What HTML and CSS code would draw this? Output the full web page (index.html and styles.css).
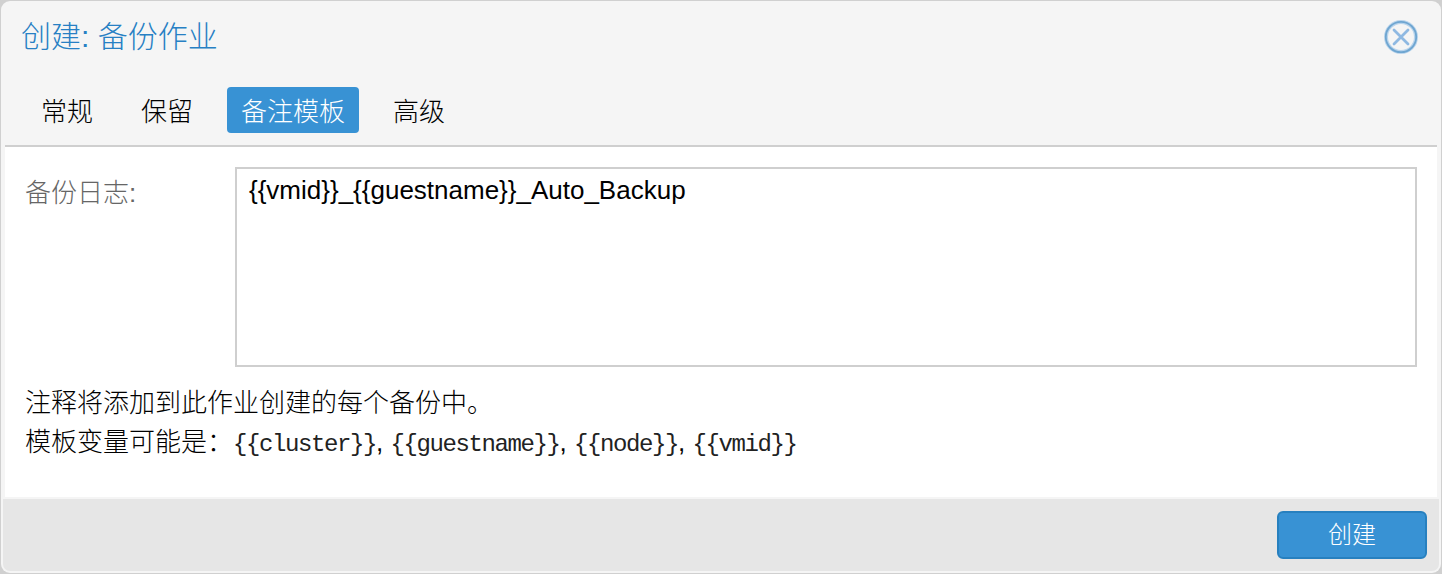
FILE: index.html
```html
<!DOCTYPE html>
<html lang="zh-CN">
<head>
<meta charset="utf-8">
<title>创建: 备份作业</title>
<link rel="stylesheet" href="styles.css">
</head>
<body>
<div class="window">
  <header class="header">
    <h1 class="title">创建: 备份作业</h1>
    <button class="close" aria-label="关闭">
      <svg width="34" height="34" viewBox="0 0 34 34" fill="none">
        <circle cx="17" cy="17" r="15" stroke="#b9d4ec" stroke-width="4"/>
        <circle cx="17" cy="17" r="15.2" stroke="#6fa6d1" stroke-width="1.8"/>
        <path d="M10 10L24 24M24 10L10 24" stroke="#8fb9e2" stroke-width="2.8" stroke-linecap="round"/>
      </svg>
    </button>
  </header>
  <nav class="tabs">
    <a class="tab">常规</a>
    <a class="tab">保留</a>
    <a class="tab active">备注模板</a>
    <a class="tab">高级</a>
  </nav>
  <main class="panel">
    <div class="field">
      <label class="label" for="notes">备份日志:</label>
      <textarea class="notes" id="notes" spellcheck="false">{{vmid}}_{{guestname}}_Auto_Backup</textarea>
    </div>
    <div class="hint">注释将添加到此作业创建的每个备份中。<br>模板变量可能是：<code>{{cluster}}</code>, <code>{{guestname}}</code>, <code>{{node}}</code>, <code>{{vmid}}</code></div>
  </main>
  <footer class="footer">
    <button class="submit">创建</button>
  </footer>
</div>
</body>
</html>
```
FILE: styles.css
```css
* { box-sizing: border-box; }
body {
  margin: 0;
  height: 574px;
  padding: 1px 1px 1px;
  overflow: hidden;
  background: #d0d0d0;
  font-family: "Liberation Sans", "Noto Sans CJK SC", sans-serif;
  font-size: 26px;
  font-weight: 300;
  color: #000;
}
.window {
  display: flex;
  flex-direction: column;
  height: 572px;
  padding: 0 2px 2px;
  overflow: hidden;
  border-radius: 9px;
  background: #f5f5f5;
}
.header {
  display: flex;
  justify-content: space-between;
  height: 86px;
  padding: 14px 21px 0 18px;
}
.title {
  margin: 0;
  font-size: 30px;
  line-height: 44px;
  font-weight: 300;
  color: #2780c4;
}
.close {
  width: 34px;
  height: 34px;
  margin-top: 5px;
  padding: 0;
  border: 0;
  background: none;
}
.close svg { display: block; }
.tabs {
  display: flex;
  gap: 20px;
  height: 60px;
  margin: 0 2px;
  padding-left: 22px;
  border-bottom: 2px solid #cfcfcf;
}
.tab {
  height: 46px;
  padding: 0 14px;
  line-height: 51px;
  border-radius: 4px;
}
.tab.active {
  color: #fff;
  background: #3892d4;
}
.panel {
  flex: 1;
  margin: 0 2px;
  padding: 20px 20px 0;
  background: #fff;
}
.field { display: flex; }
.label {
  width: 210px;
  line-height: 52px;
  color: #666;
}
.notes {
  display: block;
  flex: 1;
  height: 200px;
  padding: 6px 12px;
  border: 2px solid #cfcfcf;
  outline: 0;
  resize: none;
  overflow: hidden;
  font: 400 26px/30px "Liberation Sans", sans-serif;
  color: #000;
}
.hint {
  margin-top: 17px;
  line-height: 39px;
}
.hint code {
  font: 400 24px/30px "Liberation Mono", monospace;
  letter-spacing: -1.4px;
  color: #222;
}
.footer {
  display: flex;
  justify-content: flex-end;
  height: 72px;
  margin-top: 2px;
  padding: 12px 12px 0;
  border-radius: 0 0 7px 7px;
  background: #e6e6e6;
}
.submit {
  width: 150px;
  height: 48px;
  padding: 0;
  border: 2px solid #2780bf;
  border-radius: 6px;
  background: #3892d4;
  font: 300 24px/44px "Liberation Sans", "Noto Sans CJK SC", sans-serif;
  color: #fff;
}
```
